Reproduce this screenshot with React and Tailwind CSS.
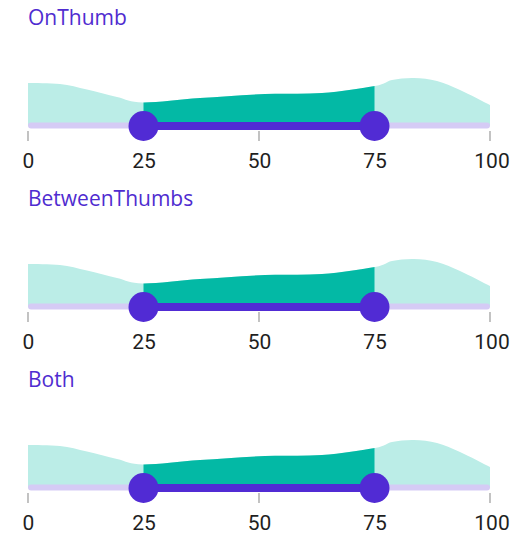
import React from 'react'

const PURPLE = '#512BD4'
const TEAL = '#03b9a5'
const TEAL_LIGHT = '#bbede7'
const TRACK_LIGHT = '#d5cbf5'

// chart points (x in px, height above track)
const points = [
  [28, 43], [60, 42], [87, 36.5], [117, 29], [143, 23.5], [200, 28], [265, 32],
  [322, 33], [375, 40], [392, 46], [414, 48], [437, 45], [460, 36], [490, 21],
]

const BASE = 95
const ticks = [0, 25, 50, 75, 100]
const tickX = (v) => 28 + v * 4.62

const buildArea = () => {
  const pts = points.map(([x, h]) => [x, BASE - h])
  let d = `M ${pts[0][0]} ${BASE} L ${pts[0][0]} ${pts[0][1]}`
  for (let i = 0; i < pts.length - 1; i++) {
    const p0 = pts[i - 1] || pts[i]
    const p1 = pts[i]
    const p2 = pts[i + 1]
    const p3 = pts[i + 2] || p2
    const c1x = p1[0] + (p2[0] - p0[0]) / 6
    const c1y = p1[1] + (p2[1] - p0[1]) / 6
    const c2x = p2[0] - (p3[0] - p1[0]) / 6
    const c2y = p2[1] - (p3[1] - p1[1]) / 6
    d += ` C ${c1x} ${c1y} ${c2x} ${c2y} ${p2[0]} ${p2[1]}`
  }
  d += ` L ${pts[pts.length - 1][0]} ${BASE} Z`
  return d
}

const areaPath = buildArea()

const Slider = ({ id }) => {
  const lo = tickX(25)
  const hi = tickX(75)
  return (
    <svg width="530" height="150" viewBox="0 0 530 150" className="block">
      <defs>
        <clipPath id={`sel-${id}`}>
          <rect x={lo} y="0" width={hi - lo} height={BASE} />
        </clipPath>
      </defs>
      <path d={areaPath} fill={TEAL_LIGHT} />
      <path d={areaPath} fill={TEAL} clipPath={`url(#sel-${id})`} />

      {/* track */}
      <line x1="31" y1={BASE - 0.5} x2="487" y2={BASE - 0.5} stroke={TRACK_LIGHT} strokeWidth="6" strokeLinecap="round" />
      <line x1={lo} y1={BASE} x2={hi} y2={BASE} stroke={PURPLE} strokeWidth="8" />

      {/* ticks */}
      {ticks.map((t) => (
        <line key={t} x1={tickX(t)} y1="100" x2={tickX(t)} y2="110" stroke="#9a9a9a" strokeWidth="1.2" />
      ))}

      <circle cx={lo} cy={BASE} r="15" fill={PURPLE} />
      <circle cx={hi} cy={BASE} r="15" fill={PURPLE} />

      {/* labels */}
      {ticks.map((t) => (
        <text
          key={t}
          x={t === 100 ? tickX(t) + 2 : tickX(t) + 0.5}
          y="137"
          textAnchor="middle"
          fill="#1f1f1f"
          style={{ fontFamily: 'Roboto, sans-serif', fontSize: 21 }}
        >
          {t}
        </text>
      ))}
    </svg>
  )
}

const Section = ({ title, id }) => (
  <div className="flex flex-col h-[181px] shrink-0">
    <p
      className="pl-[28px] pt-[3px] text-[21px] leading-[28px] text-[#4f2cd0]"
      style={{ fontFamily: '"Open Sans", sans-serif' }}
    >
      {title}
    </p>
    <Slider id={id} />
  </div>
)

export default function App() {
  return (
    <div className="w-[530px] h-[542px] bg-white overflow-hidden flex flex-col">
      <Section title="OnThumb" id="a" />
      <Section title="BetweenThumbs" id="b" />
      <Section title="Both" id="c" />
    </div>
  )
}
